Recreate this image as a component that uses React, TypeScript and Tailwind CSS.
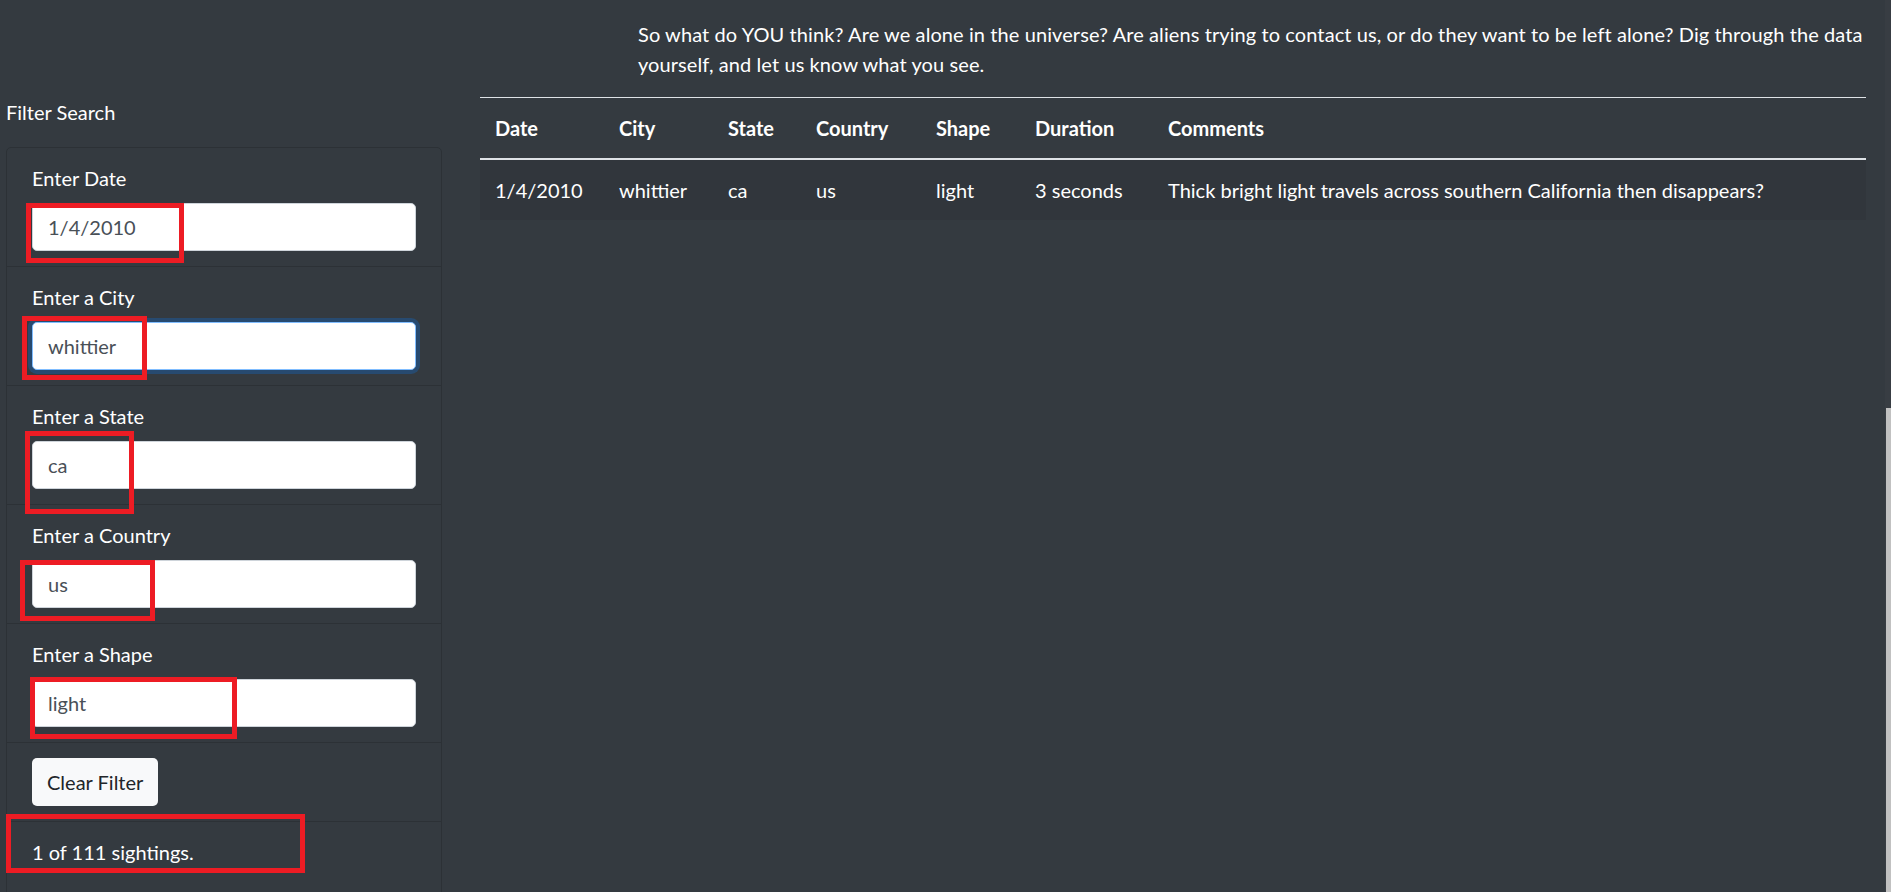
import React from 'react'

interface Sighting {
  datetime: string
  city: string
  state: string
  country: string
  shape: string
  durationMinutes: string
  comments: string
}

const sightings: Sighting[] = [
  {
    datetime: '1/4/2010',
    city: 'whittier',
    state: 'ca',
    country: 'us',
    shape: 'light',
    durationMinutes: '3 seconds',
    comments: 'Thick bright light travels across southern California then disappears?',
  },
]

const filters = [
  { id: 'datetime', label: 'Enter Date', value: '1/4/2010' },
  { id: 'city', label: 'Enter a City', value: 'whittier', focused: true },
  { id: 'state', label: 'Enter a State', value: 'ca' },
  { id: 'country', label: 'Enter a Country', value: 'us' },
  { id: 'shape', label: 'Enter a Shape', value: 'light' },
]

// red annotation frames drawn over the screenshot
const marks = [
  { key: 'date', className: 'left-[26px] top-[203px] w-[158px] h-[60px]' },
  { key: 'city', className: 'left-[22px] top-[316px] w-[125px] h-[64px]' },
  { key: 'state', className: 'left-[25px] top-[431px] w-[109px] h-[83px]' },
  { key: 'country', className: 'left-[20px] top-[560px] w-[135px] h-[61px]' },
  { key: 'shape', className: 'left-[30px] top-[677px] w-[207px] h-[62px]' },
  { key: 'count', className: 'left-[6px] top-[814px] w-[299px] h-[59px]' },
]

export default function App() {
  return (
    <div className="relative min-h-[892px] overflow-hidden bg-[#343a40] text-white font-['Lato','Open_Sans',sans-serif] text-[20px] leading-[30px]">
      <div className="flex">
        <aside className="ml-[6px] w-[436px] shrink-0 pt-[97px]">
          <div>Filter Search</div>
          <ul className="mt-[20px] rounded-t-[5px] border border-[#2c3136]">
            {filters.map((f) => (
              <li key={f.id} className="border-b border-[#2c3136] px-[25px] py-[15px]">
                <label htmlFor={f.id} className="mb-[10px] block">
                  {f.label}
                </label>
                <input
                  id={f.id}
                  type="text"
                  defaultValue={f.value}
                  className={`block h-[48px] w-full rounded-[5px] border bg-white px-[15px] text-[20px] text-[#495057] outline-none ${
                    f.focused ? 'border-[#80bdff] ring-4 ring-[#007bff]/25' : 'border-[#ced4da]'
                  }`}
                />
              </li>
            ))}
            <li className="border-b border-[#2c3136] px-[25px] py-[15px]">
              <button className="h-[48px] rounded-[5px] bg-[#f8f9fa] px-[15px] text-[#212529]">
                Clear Filter
              </button>
            </li>
            <li className="px-[25px] py-[15px] pb-[40px]">1 of 111 sightings.</li>
          </ul>
        </aside>

        <main className="ml-[38px] w-[1386px] shrink-0">
          <p className="ml-[158px] mt-[19px] whitespace-nowrap tracking-[0.09px]">
            So what do YOU think? Are we alone in the universe? Are aliens trying to contact us, or do they want to be left alone? Dig through the data
            <br />
            yourself, and let us know what you see.
          </p>

          <table className="mt-[18px] w-full table-fixed border-collapse border-t border-[#dee2e6] text-left">
            <colgroup>
              <col className="w-[124px]" />
              <col className="w-[109px]" />
              <col className="w-[88px]" />
              <col className="w-[120px]" />
              <col className="w-[99px]" />
              <col className="w-[133px]" />
              <col />
            </colgroup>
            <thead>
              <tr className="border-b-2 border-[#dee2e6]">
                {['Date', 'City', 'State', 'Country', 'Shape', 'Duration', 'Comments'].map((h) => (
                  <th key={h} className="px-[15px] py-[15px] font-bold">
                    {h}
                  </th>
                ))}
              </tr>
            </thead>
            <tbody>
              {sightings.map((s, i) => (
                <tr key={i} className="bg-[#31363c]">
                  <td className="px-[15px] py-[15px]">{s.datetime}</td>
                  <td className="px-[15px] py-[15px]">{s.city}</td>
                  <td className="px-[15px] py-[15px]">{s.state}</td>
                  <td className="px-[15px] py-[15px]">{s.country}</td>
                  <td className="px-[15px] py-[15px]">{s.shape}</td>
                  <td className="px-[15px] py-[15px]">{s.durationMinutes}</td>
                  <td className="px-[15px] py-[15px]">{s.comments}</td>
                </tr>
              ))}
            </tbody>
          </table>
        </main>
      </div>

      {marks.map((m) => (
        <div key={m.key} className={`pointer-events-none absolute border-[5px] border-[#ed1c24] ${m.className}`} />
      ))}

      {/* window scrollbar edge */}
      <div className="absolute right-0 top-0 h-full w-[6px] bg-[#383d43]">
        <div className="mt-[408px] h-[484px] w-[5px] ml-[1px] bg-[#c1c1c1]" />
      </div>
    </div>
  )
}
